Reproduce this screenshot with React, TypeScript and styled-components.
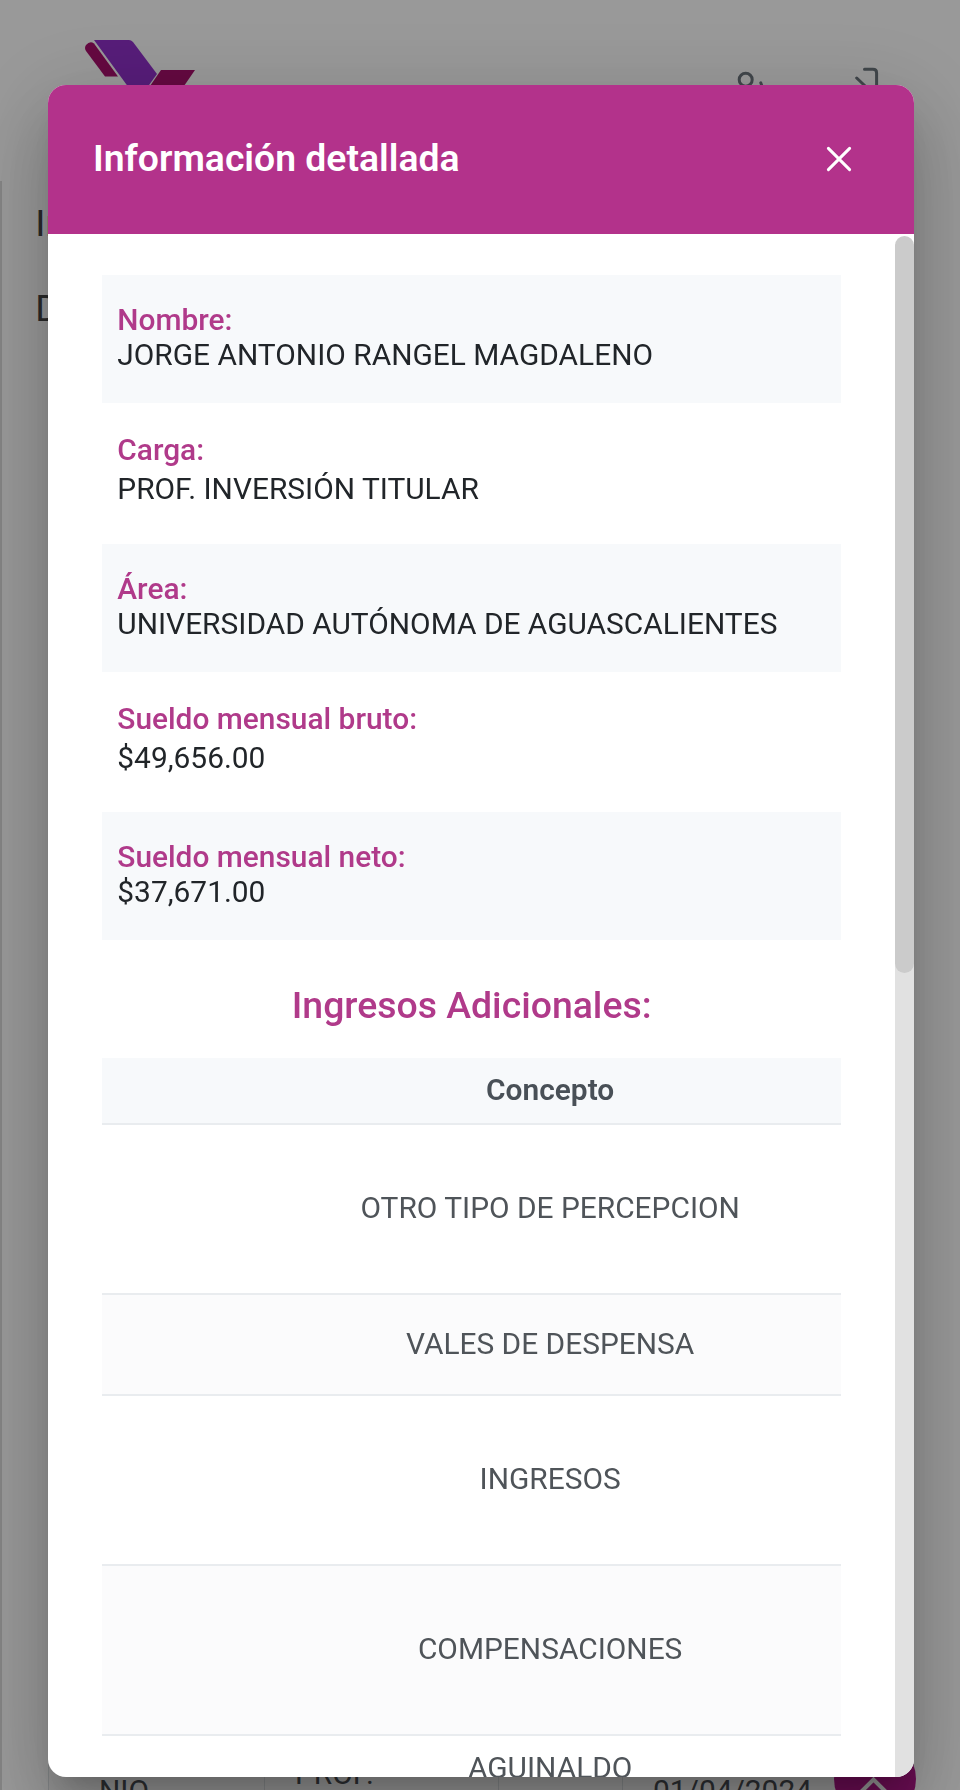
import React from "react";
import styled, { createGlobalStyle } from "styled-components";

const Global = createGlobalStyle`
  *, *::before, *::after { box-sizing: border-box; }
  html, body { margin: 0; padding: 0; overflow: hidden; }
  body { font-family: Roboto, "Liberation Sans", sans-serif; background: #fff; }
`;

const Page = styled.div`
  width: 960px;
  height: 1790px;
  overflow: hidden;
  display: flex;
  flex-direction: column;
  background: #fff;
`;

const TopBar = styled.header`
  height: 181px;
  flex: none;
  display: flex;
  align-items: flex-start;
  padding: 39px 76px 0 84px;
`;

const Actions = styled.div`
  display: flex;
  gap: 72px;
  margin: 23px 0 0 auto;

  svg {
    fill: none;
    stroke: #6c757d;
    stroke-width: 3;
    stroke-linecap: round;
    stroke-linejoin: round;
  }
`;

const Content = styled.main`
  flex: 1;
  min-height: 0;
  display: flex;
  flex-direction: column;
  border-left: 2px solid #dcdcdc;
  padding-left: 32px;
`;

const Crumb = styled.p`
  margin: 0;
  padding-left: 1.3px;
  flex: none;
  height: 85.3px;
  line-height: 85px;
  font-size: 37.33px;
  color: #444;
`;

const BackTable = styled.div`
  flex: none;
  margin: 1.4px 46px 0 14px;
  height: 1465px;
  display: grid;
  grid-template-columns: 216px 234px 124px 1fr;
  border-left: 1px solid #dde1e4;
  background: #fafafa;
`;

const BackCell = styled.div<{ $left: number; $bottom?: number }>`
  display: flex;
  align-items: flex-end;
  border-right: 1px solid #dde1e4;
  padding: 0 0 ${(p) => p.$bottom ?? 0}px ${(p) => p.$left}px;
  font-size: 29.88px;
  line-height: 36px;
  color: #4b4f55;
  white-space: nowrap;
`;

const ToTop = styled.div`
  position: fixed;
  left: 834px;
  top: 1738px;
  width: 82px;
  height: 82px;
  border-radius: 50%;
  background: #b8188f;
  display: flex;
  justify-content: center;
  padding-top: 37px;
`;

const Backdrop = styled.div`
  position: fixed;
  inset: 0;
  background: rgba(0, 0, 0, 0.4);
  padding: 85px 46px 13px 48px;
  display: flex;
`;

const Dialog = styled.section`
  flex: 1;
  min-width: 0;
  display: flex;
  flex-direction: column;
  border-radius: 18px;
  overflow: hidden;
  background: #fff;
  box-shadow:
    0 20px 28px -13px rgba(0, 0, 0, 0.2),
    0 44px 70px 6px rgba(0, 0, 0, 0.14),
    0 17px 85px 15px rgba(0, 0, 0, 0.12);
`;

const DialogHeader = styled.div`
  flex: none;
  height: 149px;
  display: flex;
  align-items: center;
  justify-content: space-between;
  padding: 0 62px 0 45px;
  background: #b3328b;
`;

const Title = styled.h2`
  margin: 0;
  font-size: 37.33px;
  line-height: 44px;
  font-weight: 600;
  color: #fff;
  white-space: nowrap;
  padding-bottom: 3px;
`;

const CloseIcon = styled.svg`
  margin-bottom: 1px;
  fill: none;
  stroke: #fff;
  stroke-width: 3;
  stroke-linecap: round;
`;

const Body = styled.div`
  flex: 1;
  min-height: 0;
  display: flex;
`;

const Scroll = styled.div`
  flex: 1;
  min-width: 0;
  overflow: hidden;
  padding: 41.3px 54px 0 54.3px;
`;

const Track = styled.div`
  width: 19px;
  flex: none;
  padding-top: 2px;
  background: linear-gradient(#fff 0 10px, #e1e1e1 10px);
`;

const Thumb = styled.div`
  height: 737px;
  border-radius: 10px;
  background: #cbcbcb;
`;

const Field = styled.div<{ $shaded: boolean }>`
  height: ${(p) => (p.$shaded ? 128 : 140.3)}px;
  padding: ${(p) => (p.$shaded ? 27.1 : 29)}px 0 0 15px;
  display: flex;
  flex-direction: column;
  gap: ${(p) => (p.$shaded ? 0 : 4)}px;
  background: ${(p) => (p.$shaded ? "#f7f9fb" : "#fff")};
  font-size: 29.88px;
  line-height: 35px;
  white-space: nowrap;
`;

const Label = styled.span`
  font-weight: 500;
  color: #b03a8a;
`;

const Value = styled.span`
  color: #212529;
`;

const Subtitle = styled.h3`
  margin: 0;
  height: 118px;
  padding-top: 43.5px;
  text-align: center;
  font-size: 37.4px;
  line-height: 44px;
  font-weight: 500;
  color: #b03a8a;
`;

const Cell = styled.div<{ $height: number; $tone?: string }>`
  height: ${(p) => p.$height}px;
  display: flex;
  align-items: center;
  justify-content: center;
  padding: 0 0 2.4px 157px;
  border-bottom: 2px solid #e9ecef;
  background: ${(p) => p.$tone ?? "#fff"};
  font-size: 29.88px;
  line-height: 35px;
  color: #4f5459;
  white-space: nowrap;
`;

const HeadCell = styled(Cell)`
  font-weight: 600;
  color: #495057;
`;

const fields = [
  ["Nombre:", "JORGE ANTONIO RANGEL MAGDALENO"],
  ["Carga:", "PROF. INVERSIÓN TITULAR"],
  ["Área:", "UNIVERSIDAD AUTÓNOMA DE AGUASCALIENTES"],
  ["Sueldo mensual bruto:", "$49,656.00"],
  ["Sueldo mensual neto:", "$37,671.00"],
];

const rows = [
  { name: "OTRO TIPO DE PERCEPCION", height: 170.5 },
  { name: "VALES DE DESPENSA", height: 100.5 },
  { name: "INGRESOS", height: 170.5 },
  { name: "COMPENSACIONES", height: 169.5 },
  { name: "AGUINALDO", height: 68 },
];

export default function App() {
  return (
    <>
      <Global />
      <Page>
        <TopBar>
          <svg width="112" height="60" viewBox="84 39 112 60">
            <path d="M86 45q4-4.500 8-1.500l24 33h-13L86 51q-2-3 0-6z" fill="#a80f6c" />
            <path d="M94 40h35q2 0 4 2l24 32-18 25h-2z" fill="#9130cb" />
            <path d="M161 70h34l-20 29h-34z" fill="#a80f6c" />
          </svg>
          <Actions>
            <svg width="36" height="36" viewBox="734 62 36 36">
              <circle cx="745.7" cy="79.7" r="6.500" />
              <path d="M760.8 82.8q2 4 0 9M736 97c0-7 4-9 10-9s10 2 10 9" />
            </svg>
            <svg width="42" height="36" viewBox="842 62 42 36">
              <path d="M864.5 69.3h8.500q3.600 0 3.600 3.600V97M856.7 78l10 9.500-10 9.500M866 87.500h-22" />
            </svg>
          </Actions>
        </TopBar>
        <Content>
          <Crumb>In</Crumb>
          <Crumb>D</Crumb>
          <BackTable>
            <BackCell $left={50} $bottom={9}>NIO</BackCell>
            <BackCell $left={30} $bottom={26}>PROF.</BackCell>
            <BackCell $left={0} />
            <BackCell $left={30} $bottom={9}>01/04/2024</BackCell>
          </BackTable>
        </Content>
        <ToTop>
          <svg width="34" height="20" viewBox="0 0 34 20" fill="none" stroke="#fff" strokeWidth="4" strokeLinecap="round">
            <path d="M3 17L15.5 4.500L28 17" />
          </svg>
        </ToTop>
      </Page>
      <Backdrop>
        <Dialog>
          <DialogHeader>
            <Title>Información detallada</Title>
            <CloseIcon width="26" height="26" viewBox="0 0 26 26">
              <path d="M2.400 2.400l21.200 21.200M23.600 2.400L2.400 23.600" />
            </CloseIcon>
          </DialogHeader>
          <Body>
            <Scroll>
              {fields.map(([label, value], i) => (
                <Field key={label} $shaded={i % 2 === 0}>
                  <Label>{label}</Label>
                  <Value>{value}</Value>
                </Field>
              ))}
              <Subtitle>Ingresos Adicionales:</Subtitle>
              <HeadCell $height={67} $tone="#f7f9fb">Concepto</HeadCell>
              {rows.map((r, i) => (
                <Cell key={r.name} $height={r.height} $tone={i % 2 ? "#fbfbfc" : "#fff"}>
                  {r.name}
                </Cell>
              ))}
            </Scroll>
            <Track><Thumb /></Track>
          </Body>
        </Dialog>
      </Backdrop>
    </>
  );
}
